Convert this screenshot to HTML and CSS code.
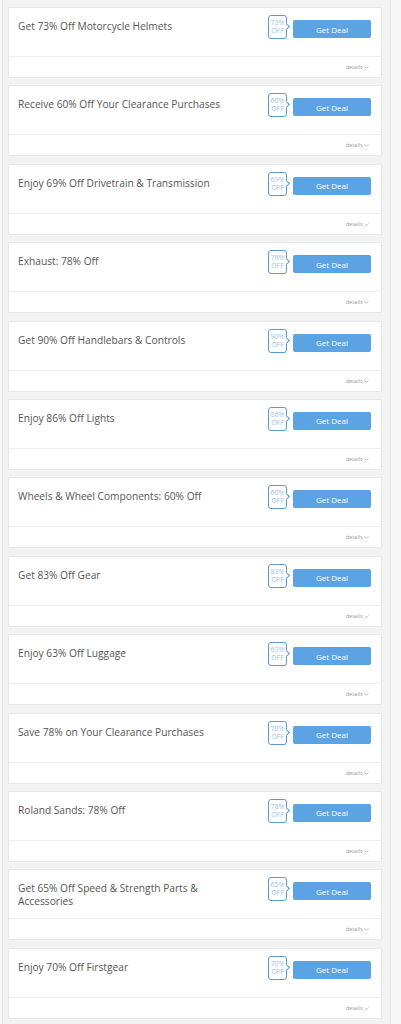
FILE: index.html
```html
<!DOCTYPE html>
<html>
<head>
	<title>Motorcycle Deals</title>
<meta name="viewport" content="width=device-width, initial-scale=1">
<link rel="stylesheet" href="styles.css">
</head>
<body>
<div class="wrap">

<div class="deal">
  <div class="head">
    <div class="title">Get 73% Off Motorcycle Helmets</div>
    <div class="badge">73%<br>OFF</div>
    <button type="button" class="getdeal">Get Deal</button>
  </div>
  <div class="foot">details <svg class="chev" width="5" height="3" viewBox="0 0 5 3"><path d="M0.5 0.5 L2.5 2.5 L4.5 0.5" fill="none" stroke="#aaa" stroke-width="0.7"/></svg></div>
</div>

<div class="deal">
  <div class="head">
    <div class="title">Receive 60% Off Your Clearance Purchases</div>
    <div class="badge">60%<br>OFF</div>
    <button type="button" class="getdeal">Get Deal</button>
  </div>
  <div class="foot">details <svg class="chev" width="5" height="3" viewBox="0 0 5 3"><path d="M0.5 0.5 L2.5 2.5 L4.5 0.5" fill="none" stroke="#aaa" stroke-width="0.7"/></svg></div>
</div>

<div class="deal">
  <div class="head">
    <div class="title">Enjoy 69% Off Drivetrain &amp; Transmission</div>
    <div class="badge">69%<br>OFF</div>
    <button type="button" class="getdeal">Get Deal</button>
  </div>
  <div class="foot">details <svg class="chev" width="5" height="3" viewBox="0 0 5 3"><path d="M0.5 0.5 L2.5 2.5 L4.5 0.5" fill="none" stroke="#aaa" stroke-width="0.7"/></svg></div>
</div>

<div class="deal">
  <div class="head">
    <div class="title">Exhaust: 78% Off</div>
    <div class="badge">78%<br>OFF</div>
    <button type="button" class="getdeal">Get Deal</button>
  </div>
  <div class="foot">details <svg class="chev" width="5" height="3" viewBox="0 0 5 3"><path d="M0.5 0.5 L2.5 2.5 L4.5 0.5" fill="none" stroke="#aaa" stroke-width="0.7"/></svg></div>
</div>

<div class="deal">
  <div class="head">
    <div class="title">Get 90% Off Handlebars &amp; Controls</div>
    <div class="badge">90%<br>OFF</div>
    <button type="button" class="getdeal">Get Deal</button>
  </div>
  <div class="foot">details <svg class="chev" width="5" height="3" viewBox="0 0 5 3"><path d="M0.5 0.5 L2.5 2.5 L4.5 0.5" fill="none" stroke="#aaa" stroke-width="0.7"/></svg></div>
</div>

<div class="deal">
  <div class="head">
    <div class="title">Enjoy 86% Off Lights</div>
    <div class="badge">86%<br>OFF</div>
    <button type="button" class="getdeal">Get Deal</button>
  </div>
  <div class="foot">details <svg class="chev" width="5" height="3" viewBox="0 0 5 3"><path d="M0.5 0.5 L2.5 2.5 L4.5 0.5" fill="none" stroke="#aaa" stroke-width="0.7"/></svg></div>
</div>

<div class="deal">
  <div class="head">
    <div class="title">Wheels &amp; Wheel Components: 60% Off</div>
    <div class="badge">60%<br>OFF</div>
    <button type="button" class="getdeal">Get Deal</button>
  </div>
  <div class="foot">details <svg class="chev" width="5" height="3" viewBox="0 0 5 3"><path d="M0.5 0.5 L2.5 2.5 L4.5 0.5" fill="none" stroke="#aaa" stroke-width="0.7"/></svg></div>
</div>

<div class="deal">
  <div class="head">
    <div class="title">Get 83% Off Gear</div>
    <div class="badge">83%<br>OFF</div>
    <button type="button" class="getdeal">Get Deal</button>
  </div>
  <div class="foot">details <svg class="chev" width="5" height="3" viewBox="0 0 5 3"><path d="M0.5 0.5 L2.5 2.5 L4.5 0.5" fill="none" stroke="#aaa" stroke-width="0.7"/></svg></div>
</div>

<div class="deal">
  <div class="head">
    <div class="title">Enjoy 63% Off Luggage</div>
    <div class="badge">63%<br>OFF</div>
    <button type="button" class="getdeal">Get Deal</button>
  </div>
  <div class="foot">details <svg class="chev" width="5" height="3" viewBox="0 0 5 3"><path d="M0.5 0.5 L2.5 2.5 L4.5 0.5" fill="none" stroke="#aaa" stroke-width="0.7"/></svg></div>
</div>

<div class="deal">
  <div class="head">
    <div class="title">Save 78% on Your Clearance Purchases</div>
    <div class="badge">78%<br>OFF</div>
    <button type="button" class="getdeal">Get Deal</button>
  </div>
  <div class="foot">details <svg class="chev" width="5" height="3" viewBox="0 0 5 3"><path d="M0.5 0.5 L2.5 2.5 L4.5 0.5" fill="none" stroke="#aaa" stroke-width="0.7"/></svg></div>
</div>

<div class="deal">
  <div class="head">
    <div class="title">Roland Sands: 78% Off</div>
    <div class="badge">78%<br>OFF</div>
    <button type="button" class="getdeal">Get Deal</button>
  </div>
  <div class="foot">details <svg class="chev" width="5" height="3" viewBox="0 0 5 3"><path d="M0.5 0.5 L2.5 2.5 L4.5 0.5" fill="none" stroke="#aaa" stroke-width="0.7"/></svg></div>
</div>

<div class="deal">
  <div class="head">
    <div class="title">Get 65% Off Speed &amp; Strength Parts &amp; Accessories</div>
    <div class="badge">65%<br>OFF</div>
    <button type="button" class="getdeal">Get Deal</button>
  </div>
  <div class="foot">details <svg class="chev" width="5" height="3" viewBox="0 0 5 3"><path d="M0.5 0.5 L2.5 2.5 L4.5 0.5" fill="none" stroke="#aaa" stroke-width="0.7"/></svg></div>
</div>

<div class="deal">
  <div class="head">
    <div class="title">Enjoy 70% Off Firstgear</div>
    <div class="badge">70%<br>OFF</div>
    <button type="button" class="getdeal">Get Deal</button>
  </div>
  <div class="foot">details <svg class="chev" width="5" height="3" viewBox="0 0 5 3"><path d="M0.5 0.5 L2.5 2.5 L4.5 0.5" fill="none" stroke="#aaa" stroke-width="0.7"/></svg></div>
</div>

</div>
</body>
</html>
```

FILE: styles.css
```css
body {
  margin: 0;
  background-color: #f7f7f7;
  font-family: "Open Sans", "Liberation Sans", Arial, sans-serif;
}
.wrap {
  margin-left: 2px;
  width: 374px;
  padding: 7px 8px 1px 5px;
  background-color: #f2f2f2;
  border-left: 1px solid #e2e2e2;
  border-right: 1px solid #e6e6e6;
}
.deal {
  background-color: #fff;
  border: 1px solid #e8e8e8;
  margin-bottom: 7.4px;
}
.head {
  display: flex;
  align-items: flex-start;
  height: 48px;
  padding: 7px 10px 0 9px;
  box-sizing: border-box;
}
.title {
  flex: 1;
  padding-top: 5px;
  padding-right: 30px;
  font-size: 10.2px;
  line-height: 13px;
  color: #555;
}
.badge {
  position: relative;
  width: 19px;
  height: 24px;
  box-sizing: border-box;
  border: 1px solid #5b9bd5;
  border-radius: 3px;
  margin-right: 6px;
  padding-top: 3px;
  font-size: 7px;
  line-height: 8px;
  color: #9cc2e6;
  text-align: center;
  background-color: #fff;
}
.badge:after {
  content: "";
  position: absolute;
  right: -3px;
  top: 8px;
  width: 4px;
  height: 4px;
  background-color: #fff;
  border-top: 1px solid #5b9bd5;
  border-right: 1px solid #5b9bd5;
  transform: rotate(45deg);
}
.getdeal {
  width: 78px;
  height: 18px;
  margin-top: 5px;
  border: none;
  border-radius: 2px;
  background-color: #5ca3e4;
  color: #fff;
  font-family: "Open Sans", "Liberation Sans", Arial, sans-serif;
  font-size: 8px;
  padding: 0;
  cursor: pointer;
}
.foot {
  height: 20px;
  border-top: 1px solid #eeeeee;
  padding-right: 12px;
  text-align: right;
  font-size: 5.5px;
  line-height: 20px;
  color: #999;
}
.chev {
  vertical-align: middle;
}
```
